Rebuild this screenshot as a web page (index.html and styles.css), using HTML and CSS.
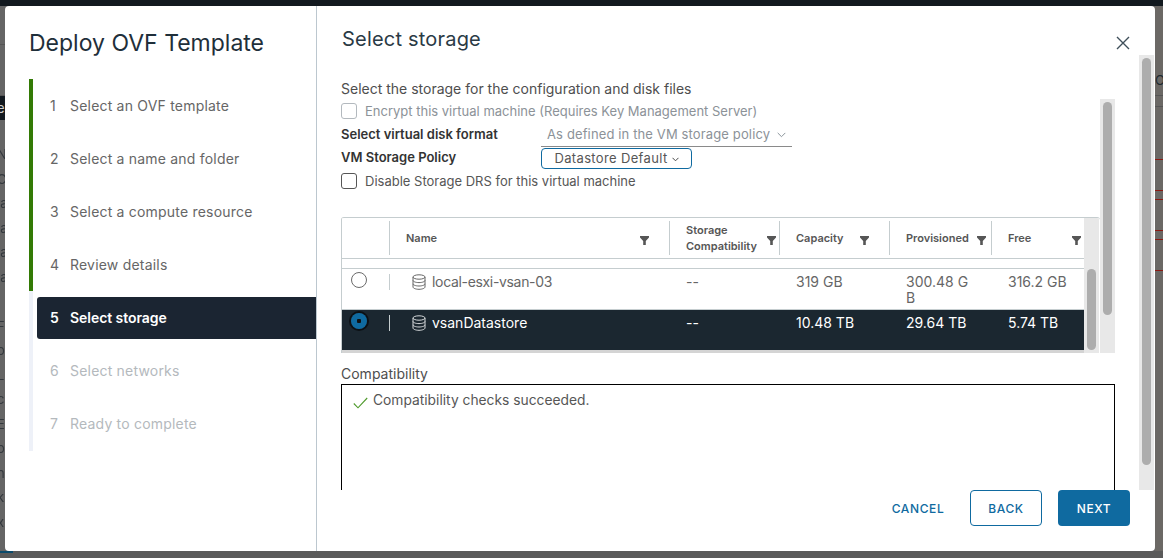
FILE: index.html
```html
<!DOCTYPE html>
<html lang="en">
<head>
<meta charset="utf-8">
<title>Deploy OVF Template</title>
<link rel="stylesheet" href="styles.css">
</head>
<body>
<div class="topbar"></div>
<div class="stage">
  <div class="edge edge-left">
    <div class="edge-rule edge-rule-1"></div>
    <div class="edge-dark">e</div>
    <div class="edge-letters">N<br>C<br>la<br>la<br>la<br>la<br>&nbsp;<br>F<br>o<br>L<br>c<br>E<br>o<br>n<br>k<br>x</div>
  </div>
  <div class="modal">
    <aside class="side">
      <h1 class="side-title">Deploy OVF Template</h1>
      <ol class="steps">
        <li class="step done"><span class="num">1</span><span>Select an OVF template</span></li>
        <li class="step done"><span class="num">2</span><span>Select a name and folder</span></li>
        <li class="step done"><span class="num">3</span><span>Select a compute resource</span></li>
        <li class="step done"><span class="num">4</span><span>Review details</span></li>
        <li class="step current"><span class="num">5</span><span>Select storage</span></li>
        <li class="step todo"><span class="num">6</span><span>Select networks</span></li>
        <li class="step todo"><span class="num">7</span><span>Ready to complete</span></li>
      </ol>
    </aside>
    <main class="main">
      <header class="main-head">
        <h2 class="main-title">Select storage</h2>
        <button class="close" aria-label="Close">
          <svg width="14" height="14" viewBox="0 0 14 14"><path d="M1 1 13 13M13 1 1 13" stroke="#3f4f5a" stroke-width="1.4" fill="none"/></svg>
        </button>
      </header>
      <div class="body">
        <div class="body-content">
          <p class="intro">Select the storage for the configuration and disk files</p>
          <div class="inner">
            <div class="inner-content">
              <label class="check-row disabled"><span class="box"></span>Encrypt this virtual machine (Requires Key Management Server)</label>
              <div class="field-row disk-row">
                <span class="field-label">Select virtual disk format</span>
                <span class="select">As defined in the VM storage policy
                  <svg class="chev" width="9" height="6" viewBox="0 0 9 6"><path d="M.7.9 4.5 4.7 8.3.9" stroke="#8a949b" stroke-width="1" fill="none"/></svg>
                </span>
              </div>
              <div class="field-row policy-row">
                <span class="field-label">VM Storage Policy</span>
                <button class="policy">Datastore Default
                  <svg width="7" height="5" viewBox="0 0 7 5"><path d="M.5.8 3.5 3.8 6.5.8" stroke="#4a4a4a" stroke-width="1" fill="none"/></svg>
                </button>
              </div>
              <label class="check-row"><span class="box"></span>Disable Storage DRS for this virtual machine</label>
              <div class="table">
                <div class="grid">
                  <div class="cell head"></div>
                  <div class="cell head"><span class="sep"></span><span class="head-text">Name</span><svg class="funnel f-wide" width="9" height="9" viewBox="0 0 9 9"><path d="M0 0H9V1.5L5.8 5V9H3.2V5L0 1.5Z"/></svg></div>
                  <div class="cell head"><span class="sep"></span><span class="head-text">Storage<br>Compatibility</span><svg class="funnel f-narrow" width="9" height="9" viewBox="0 0 9 9"><path d="M0 0H9V1.5L5.8 5V9H3.2V5L0 1.5Z"/></svg></div>
                  <div class="cell head"><span class="sep"></span><span class="head-text">Capacity</span><svg class="funnel f-wide" width="9" height="9" viewBox="0 0 9 9"><path d="M0 0H9V1.5L5.8 5V9H3.2V5L0 1.5Z"/></svg></div>
                  <div class="cell head"><span class="sep"></span><span class="head-text">Provisioned</span><svg class="funnel f-mid" width="9" height="9" viewBox="0 0 9 9"><path d="M0 0H9V1.5L5.8 5V9H3.2V5L0 1.5Z"/></svg></div>
                  <div class="cell head"><span class="sep"></span><span class="head-text">Free</span><svg class="funnel f-narrow" width="9" height="9" viewBox="0 0 9 9"><path d="M0 0H9V1.5L5.8 5V9H3.2V5L0 1.5Z"/></svg></div>
                  <div class="spacer"></div>

                  <div class="cell row"><span class="radio"></span></div>
                  <div class="cell row name"><span class="rsep"></span><svg class="db" width="14" height="16" viewBox="0 0 14 16"><g fill="none" stroke="currentColor" stroke-width="1"><ellipse cx="7" cy="3" rx="6" ry="2.2"/><path d="M1 3V13C1 14.2 3.7 15.3 7 15.3S13 14.2 13 13V3M1 6.4C1 7.6 3.7 8.6 7 8.6S13 7.6 13 6.4M1 9.8C1 11 3.7 12 7 12S13 11 13 9.8"/></g></svg><span class="tight">local-esxi-vsan-03</span></div>
                  <div class="cell row">--</div>
                  <div class="cell row">319 GB</div>
                  <div class="cell row">300.48 G<br>B</div>
                  <div class="cell row">316.2 GB</div>

                  <div class="cell row sel"><span class="radio on"></span></div>
                  <div class="cell row sel name"><span class="rsep"></span><svg class="db" width="14" height="16" viewBox="0 0 14 16"><g fill="none" stroke="currentColor" stroke-width="1"><ellipse cx="7" cy="3" rx="6" ry="2.2"/><path d="M1 3V13C1 14.2 3.7 15.3 7 15.3S13 14.2 13 13V3M1 6.4C1 7.6 3.7 8.6 7 8.6S13 7.6 13 6.4M1 9.8C1 11 3.7 12 7 12S13 11 13 9.8"/></g></svg><span>vsanDatastore</span></div>
                  <div class="cell row sel">--</div>
                  <div class="cell row sel">10.48 TB</div>
                  <div class="cell row sel">29.64 TB</div>
                  <div class="cell row sel">5.74 TB</div>
                </div>
                <div class="scrollbar sb-table"><span class="thumb"></span></div>
              </div>
            </div>
            <div class="scrollbar sb-inner"><span class="thumb"></span></div>
          </div>
          <div class="compat-label">Compatibility</div>
          <div class="compat-box">
            <svg width="15" height="12" viewBox="0 0 15 12"><path d="M.8 6.5 5 10.8 14.2 1" stroke="#4f9a2c" stroke-width="1.1" fill="none"/></svg>
            <span>Compatibility checks succeeded.</span>
          </div>
        </div>
        <div class="scrollbar sb-outer"><span class="thumb"></span></div>
      </div>
      <footer class="foot">
        <button class="btn link">CANCEL</button>
        <button class="btn outline">BACK</button>
        <button class="btn solid">NEXT</button>
      </footer>
    </main>
  </div>
  <div class="edge edge-right">
    <div class="edge-o">O</div>
  </div>
</div>
<div class="bottombar"><span class="bottom-accent"></span></div>
</body>
</html>
```

FILE: styles.css
```css
* { box-sizing: border-box; }
html, body { margin: 0; padding: 0; }
body {
  width: 1163px;
  height: 558px;
  overflow: hidden;
  background: #656565;
  font-family: "Inter", "Liberation Sans", sans-serif;
  font-size: 13px;
  color: #565656;
  display: flex;
  flex-direction: column;
}
button { font: inherit; background: none; border: 0; padding: 0; }
h1, h2, p, ol { margin: 0; padding: 0; font-weight: 400; }
ol { list-style: none; }

.topbar { height: 6px; background: #12191f; flex: none; }
.stage { display: flex; height: 545px; flex: none; }
.bottombar { flex: 1; background: #5a5a5a; display: flex; }
.bottom-accent { display: block; width: 13px; height: 2px; background: #0b4a6b; }

.edge { overflow: hidden; background: #656565; flex: none; }
.edge-left { width: 5px; padding-top: 38px; color: #33383d; font-size: 13px; }
.edge-rule-1 { height: 52px; border-top: 1px solid #555; border-bottom: 1px solid #555; }
.edge-dark { height: 24px; background: #12191f; color: #ccc; line-height: 24px; margin-bottom: 22px; margin-left: -3px; }
.edge-letters { line-height: 24.5px; margin-left: -3px; filter: blur(.4px); }
.edge-right {
  width: 8px;
  background:
    linear-gradient(#8b1a12, #8b1a12) 0 153px / 8px 1px no-repeat,
    linear-gradient(#8b1a12, #8b1a12) 0 184px / 8px 1px no-repeat,
    linear-gradient(#8b1a12, #8b1a12) 0 193px / 8px 1px no-repeat,
    linear-gradient(#8b1a12, #8b1a12) 0 224px / 8px 1px no-repeat,
    linear-gradient(#8b1a12, #8b1a12) 0 233px / 8px 1px no-repeat,
    linear-gradient(#8b1a12, #8b1a12) 0 264px / 8px 1px no-repeat,
    linear-gradient(#555, #555) 0 89px / 8px 1px no-repeat,
    linear-gradient(#555, #555) 0 100px / 8px 1px no-repeat,
    #6b6865;
}
.edge-o { color: #1f2a30; font-size: 13px; line-height: 16px; margin-top: 66px; }

.modal {
  width: 1150px;
  height: 545px;
  flex: none;
  display: flex;
  background: #fff;
  border-radius: 4px;
  overflow: hidden;
}

.side {
  width: 312px;
  flex: none;
  border-right: 1px solid #bcc7cf;
  padding-left: 24px;
}
.side-title {
  font-size: 23px;
  line-height: 32px;
  color: #1f2f3a;
  margin-top: 21px;
  margin-bottom: 20px;
  white-space: nowrap;
}
.steps { width: 287px; }
.step {
  display: flex;
  align-items: center;
  height: 53px;
  font-size: 14px;
  letter-spacing: .2px;
  color: #666;
  padding-left: 17px;
  border-left: 4px solid #eef1f8;
}
.step .num { width: 20px; flex: none; }
.step.done { border-left-color: #337a05; }
.step.todo { color: #b4b9bd; }
.step.todo:last-child { height: 54px; padding-bottom: 1px; }
.step.current { color: #fff; font-weight: 600; letter-spacing: -.05px; position: relative; }
.step.current::before {
  content: "";
  position: absolute;
  left: 4px;
  right: 0;
  top: 6px;
  bottom: 5px;
  background: #1b2532;
  border-radius: 3px 0 0 3px;
}
.step.current span { position: relative; }

.main { flex: 1; min-width: 0; display: flex; flex-direction: column; }
.main-head {
  height: 49px;
  flex: none;
  display: flex;
  justify-content: space-between;
  padding: 21px 25px 0 25px;
}
.main-title { font-size: 20px; line-height: 24px; letter-spacing: .2px; color: #2a3a45; }
.close { width: 14px; height: 14px; margin-top: 9px; display: block; }

.body { height: 435px; flex: none; display: flex; overflow: hidden; padding-right: 1px; }
.body-content { width: 822px; flex: none; padding: 24px 0 0 24px; }
.intro { font-size: 14px; line-height: 20px; color: #4e4e4e; }

.scrollbar { flex: none; width: 15px; background: #e8e8e8; padding: 3px; display: block; }
.scrollbar .thumb { display: block; width: 9px; background: #adadad; border-radius: 5px; }
.sb-outer { height: 435px; }
.sb-outer .thumb { height: 407px; }
.sb-inner { height: 254px; }
.sb-inner .thumb { height: 213px; }
.sb-table { height: 135px; padding-top: 51px; }
.sb-table .thumb { height: 81px; }

.inner { display: flex; width: 774px; height: 254px; }
.inner-content { width: 759px; flex: none; padding-top: 2px; }

.check-row { display: flex; align-items: center; height: 20px; font-size: 13px; color: #565656; }
.check-row.disabled { color: #8c9298; }
.box {
  width: 16px;
  height: 16px;
  border: 1px solid #565656;
  border-radius: 3px;
  margin-right: 8px;
  flex: none;
}
.disabled .box { border-color: #b3b9be; }

.field-row { display: flex; align-items: center; }
.field-label { width: 200px; font-size: 13px; font-weight: 600; color: #333; flex: none; }
.disk-row { height: 24px; margin-top: 2px; }
.disk-row .field-label { margin-top: -2px; }
.select {
  width: 251px;
  height: 24px;
  line-height: 22px;
  padding-left: 6px;
  font-size: 13px;
  letter-spacing: .13px;
  color: #8c9298;
  border-bottom: 1px solid #8a8a8a;
  white-space: nowrap;
}
.chev { margin-left: 3px; vertical-align: 1px; }
.policy-row { height: 23px; margin-bottom: 1px; }
.policy-row .field-label { margin-top: -3px; }
.policy {
  width: 151px;
  height: 21px;
  border: 1px solid #0f6aa0;
  border-radius: 4px;
  padding-bottom: 2px;
  font-size: 13px;
  letter-spacing: .35px;
  color: #565656;
  white-space: nowrap;
}
.policy svg { vertical-align: 1px; }

.table {
  display: flex;
  height: 136px;
  margin-top: 26px;
  border-top: 1px solid #c5cdcf;
  border-radius: 3px 3px 0 0;
  overflow: hidden;
}
.grid {
  width: 743px;
  flex: none;
  display: grid;
  grid-template-columns: 47px 280px 110px 110px 102px 93px;
  grid-template-rows: 40px 11px 41px 40px;
  align-content: start;
  border-left: 1px solid #c5cdcf;
  background: #d4d4d4;
}

.cell { position: relative; font-size: 13px; color: #666; background: #fff; }
.head { display: flex; align-items: center; padding-left: 17px; }
.head-text { font-size: 11px; font-weight: 600; line-height: 16px; color: #565656; flex: 1; min-width: 0; white-space: nowrap; }
.sep { position: absolute; left: 0; top: 3px; height: 34px; border-left: 1px solid #c5cdcf; }
.funnel { fill: #565656; flex: none; margin-top: 4px; }
.f-wide { margin-right: 20px; }
.f-mid { margin-right: 5px; }
.f-narrow { margin-right: 3px; }
.spacer { grid-column: 1 / -1; background: #fff; border-top: 1px solid #c5cdcf; border-bottom: 1px solid #c5cdcf; }
.row { padding: 5px 0 0 17px; line-height: 16px; border-bottom: 1px solid #c5cdcf; font-size: 14px; }
.row.sel { background: #1b2730; color: #fff; border-bottom: 0; }
.name { display: flex; padding-left: 0; }
.tight { letter-spacing: -.33px; }
.rsep { position: absolute; left: 0; top: 5px; height: 16px; border-left: 1px solid #c5cdcf; }
.db { margin: 0 6px 0 23px; color: #666; flex: none; }
.sel .db { color: #d5d8da; }
.radio {
  position: absolute;
  left: 9px;
  top: 3px;
  width: 16px;
  height: 16px;
  border: 1px solid #6b6b6b;
  border-radius: 50%;
  background: #fff;
}
.radio.on {
  border: 0;
  background: radial-gradient(circle, #101010 0 2px, #0f6aa0 2.5px);
  box-shadow: 0 0 0 2px #0c1014;
}

.compat-label { font-size: 14px; line-height: 20px; color: #4e4e4e; margin-top: 11px; }
.compat-box {
  width: 774px;
  height: 200px;
  border: 1px solid #000;
  padding: 6px 11px;
  font-size: 13.8px;
  color: #565656;
  display: flex;
  align-items: flex-start;
  gap: 5px;
}
.compat-box svg { margin-top: 6px; flex: none; }
.compat-box span { line-height: 18px; }

.foot {
  flex: 1;
  display: flex;
  justify-content: flex-end;
  align-items: flex-start;
  padding-right: 25px;
  gap: 16px;
}
.btn {
  width: 72px;
  height: 36px;
  font-size: 12px;
  font-weight: 500;
  letter-spacing: .6px;
  border-radius: 4px;
  color: #0f6aa0;
}
.btn.outline { border: 1px solid #0f6aa0; }
.btn.solid { background: #0f6aa0; color: #fff; }
```
